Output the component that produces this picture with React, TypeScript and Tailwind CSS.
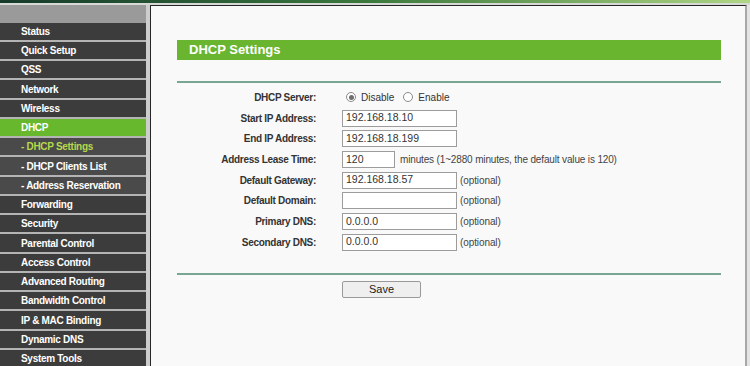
import React from "react";

const menu = [
  { label: "Status" },
  { label: "Quick Setup" },
  { label: "QSS" },
  { label: "Network" },
  { label: "Wireless" },
  { label: "DHCP", active: true },
  { label: "- DHCP Settings", sub: true, current: true },
  { label: "- DHCP Clients List", sub: true },
  { label: "- Address Reservation", sub: true },
  { label: "Forwarding" },
  { label: "Security" },
  { label: "Parental Control" },
  { label: "Access Control" },
  { label: "Advanced Routing" },
  { label: "Bandwidth Control" },
  { label: "IP & MAC Binding" },
  { label: "Dynamic DNS" },
  { label: "System Tools" },
];

function Radio({ checked }: { checked?: boolean }) {
  return (
    <span className="w-[10px] h-[10px] rounded-full border border-[#8a8a8a] bg-white flex items-center justify-center">
      {checked && <span className="w-[5px] h-[5px] rounded-full bg-[#6f6f6f]" />}
    </span>
  );
}

function Field({ value, w = "w-[115px]" }: { value: string; w?: string }) {
  return (
    <div className={`${w} h-[17px] border border-[#9c9c9c] bg-white flex items-center px-[3px] text-[10.5px] text-[#333]`}>
      {value}
    </div>
  );
}

const Optional = () => <span className="ml-[3px] text-[10px] tracking-[-0.1px] text-[#444]">(optional)</span>;

export default function App() {
  const rows: { label: string; body: React.ReactNode }[] = [
    {
      label: "DHCP Server:",
      body: (
        <div className="flex items-center text-[10px] text-[#333] pl-[4px]">
          <Radio checked />
          <span className="ml-[5px]">Disable</span>
          <span className="ml-[9px]"><Radio /></span>
          <span className="ml-[5px]">Enable</span>
        </div>
      ),
    },
    { label: "Start IP Address:", body: <Field value="192.168.18.10" /> },
    { label: "End IP Address:", body: <Field value="192.168.18.199" /> },
    {
      label: "Address Lease Time:",
      body: (
        <div className="flex items-center">
          <Field value="120" w="w-[53px]" />
          <span className="ml-[5px] text-[10px] tracking-[-0.15px] text-[#444]">minutes (1~2880 minutes, the default value is 120)</span>
        </div>
      ),
    },
    { label: "Default Gateway:", body: <div className="flex items-center"><Field value="192.168.18.57" /><Optional /></div> },
    { label: "Default Domain:", body: <div className="flex items-center"><Field value="" /><Optional /></div> },
    { label: "Primary DNS:", body: <div className="flex items-center"><Field value="0.0.0.0" /><Optional /></div> },
    { label: "Secondary DNS:", body: <div className="flex items-center"><Field value="0.0.0.0" /><Optional /></div> },
  ];

  return (
    <div className="w-[750px] h-[366px] overflow-hidden flex flex-col bg-[#e2e2e2] font-['Liberation_Sans',Arial,sans-serif]">
      {/* top strip */}
      <div className="h-[3px] bg-gradient-to-r from-[#163a2a] via-[#3d7a3e] to-[#b0d786]" />
      <div className="h-[2px] bg-[#d6d9d6]" />

      <div className="flex flex-1 min-h-0">
        {/* sidebar */}
        <aside className="w-[146px] flex flex-col bg-[#3c3c3c]">
          <div className="h-[17.7px] bg-[#9a9a9a] shrink-0" />
          {menu.map((m) => (
            <div
              key={m.label}
              className={`h-[19.25px] shrink-0 border-b-2 border-[#b4b4b4] flex items-center pl-[21px] text-[10px] font-bold tracking-[-0.3px] ${
                m.active ? "bg-[#67b82c] text-white" : m.sub ? "bg-[#4a4a4a]" : "bg-[#3c3c3c] text-white"
              } ${m.current ? "text-[#b5d94c]" : m.sub ? "text-white" : ""}`}
            >
              {m.label}
            </div>
          ))}
        </aside>
        <div className="w-[4px] bg-[#cdcdcd]" />

        {/* main */}
        <main className="w-[597px] bg-[#f9f9f9] border-l border-t border-[#262626] border-r-2 border-r-[#a8a8a8] pt-[34px] pl-[26px]">
          <div className="w-[544px]">
            <div className="h-[20px] bg-[#6ab52f] flex items-center pl-[12px] text-white text-[13px] font-bold">
              DHCP Settings
            </div>
            <div className="mt-[21px] h-[2px] bg-[#78a693]" />

            <div className="mt-[4px] grid grid-cols-[139px_1fr] gap-x-[26px]">
              {rows.map((r) => (
                <React.Fragment key={r.label}>
                  <div className="h-[20.7px] flex items-center justify-end text-[10px] font-bold tracking-[-0.3px] text-[#333]">
                    {r.label}
                  </div>
                  <div className="h-[20.7px] flex items-center">{r.body}</div>
                </React.Fragment>
              ))}
            </div>

            <div className="mt-[20px] h-[2px] bg-[#78a693]" />
            <div className="mt-[6px] pl-[165px]">
              <button className="w-[79px] h-[17px] border border-[#9a9a9a] rounded-[2px] bg-[#efefef] text-[11px] text-[#222] flex items-center justify-center">
                Save
              </button>
            </div>
          </div>
        </main>
        <div className="w-[3px] bg-[#e4e4e4]" />
      </div>
    </div>
  );
}
